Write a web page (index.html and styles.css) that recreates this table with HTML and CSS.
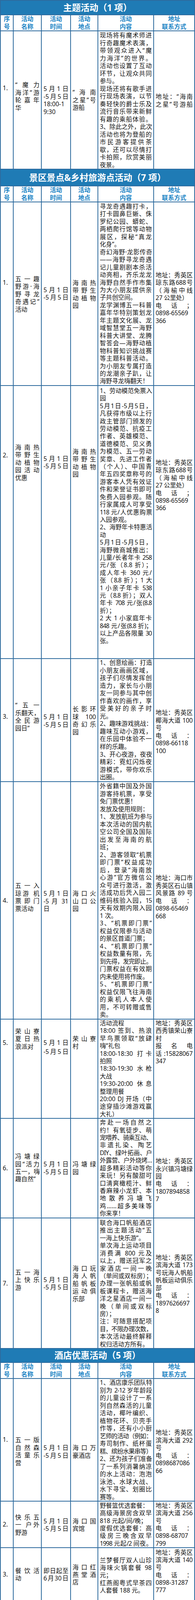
FILE: index.html
```html
<!DOCTYPE html>
<html lang="zh-CN">
<head>
<meta charset="utf-8">
<title>五一活动一览</title>
<link rel="stylesheet" href="styles.css">
</head>
<body>
<table class="sheet">
<colgroup><col class="c1"><col class="c2"><col class="c3"><col class="c4"><col class="c5"><col class="c6"></colgroup>
<tbody>
<tr class="band b1"><th colspan="6">主题活动（1 项）</th></tr>
<tr class="hd"><th>序<br>号</th><th>活动<br>名称</th><th>活动<br>时间</th><th>活动<br>地点</th><th>活动<br>内容</th><th>地址<br>联系方式</th></tr>
<tr class="s1r1">
<td class="n">1.</td>
<td class="nm">“魔力<br>海洋”游<br>轮嘉年<p>华</p></td>
<td class="tm">5月1日<br>-5月5日<br>18:00-1<p>9:30</p></td>
<td class="lc">“海南<br>之星”号<p>游船</p></td>
<td class="ct">现场将有魔术师进<br>行奇趣魔术表演，<br>带领观众进入“魔<br>力海洋”的世界。<br>活动也设置了互动<br>环节，让观众共同<p>参与。</p>现场还将有歌手进<br>行现场表演，以节<br>奏轻快的爵士乐及<br>流行音乐带来新鲜<br>有趣的乘船体验。<br><span class="k">3、除此之外，此次</span><br>活动也将为登船的<br>市民游客提供茶<br>歇，还可以尽情打<br>卡拍照，欣赏美丽<p>夜景。</p></td>
<td class="ad">地址：“海南<br>之星”号游船</td>
</tr>
<tr class="band b2"><th colspan="6">景区景点&amp;乡村旅游点活动（7 项）</th></tr>
<tr class="hd"><th>序<br>号</th><th>活动<br>名称</th><th>活动<br>时间</th><th>活动<br>地点</th><th>活动<br>内容</th><th>地址<br>联系方式</th></tr>
<tr class="s2r1">
<td class="n">1.</td>
<td class="nm">五一趣<br>野游·海<br>野寻龙<br>奇遇记”<p>活动</p></td>
<td class="tm">5月1日<br>-5月5日</td>
<td class="lc">海南热<br>带野生<br>动植物<p>园</p></td>
<td class="ct">寻龙奇遇趣打卡，<br>打卡圆鼻巨蜥、侏<br>罗纪公园、蟒蛇、<br>两栖爬行馆等动物<br>展区，探秘“真龙<p>化身”。</p><span class="k">奇幻海野·龙影传奇</span><br>——海野寻龙奇遇<br>记儿童剧剧本杀活<br>动亮相，齐乐龙龙<br>海野自然手作市集<br>为大小朋友提供亲<p>子共创空间。</p>龙学渊博五一科普<br>嘉年华特别策划龙<br>年主题文化展、龙<br>域智慧堂五一海野<br>科普大讲堂、龙腾<br>智答会—海野动植<br>物科普知识挑战赛<br>等主题科普活动。<br>为小朋友专属打造<br>的龙潮亲子趴，让<p>海野寻龙嗨翻天！</p></td>
<td class="ad">地址：秀英区<br>琼东路688号<br>（海榆中线<p>27 公里处）</p>电话；<br>0898-65569<p>366</p></td>
</tr>
<tr class="s2r2">
<td class="n">2.</td>
<td class="nm">海南热<br>带野生<br>动植物<br>园活动<p>优惠</p></td>
<td class="tm">5月1日<br>-5月5日</td>
<td class="lc">海南热<br>带野生<br>动植物<p>园</p></td>
<td class="ct"><span class="k">1、劳动模范免票入</span><p>园</p>5月1日-5月5日，<br>凡获得市级以上行<br>政主管部门颁发的<br>劳动模范、抗疫工<br>作者、英雄模范、<br>道德模范、见义勇<br>为模范、五一劳动<br>奖章、先进工作者<br>（个人）、中国青<br>年五四奖章称号的<br>游客本人凭有效证<br>件和荣誉证书即可<br>免费入园参观。随<br>行家属成人可享受<br><span class="k">118 元/人优惠购票</span><p>入园参观。</p><span class="k">2、海野年卡特惠活</span><p>动</p>5月1日-5月5日，<br>海野微商城推出：<br><span class="k">儿童/长者年卡 258</span><br>元/张（8.8 折）；<br>成人年卡 360 元/<br><span class="k">张（8.8 折）；1 大</span><br><span class="k">1 小亲子年卡 538</span><br><span class="k">元（8.8 折）；双人</span><br><span class="k">年卡 708 元/张(8.8</span><p>折）；</p>2 大 1 小家庭年卡<br><span class="k">848 元/张(8.8 折)；</span><br><span class="k">以上产品各限量 30</span><p>张。</p></td>
<td class="ad">地址：秀英区<br>琼东路688号<br>（海榆中线<p>27 公里处）</p>电话；<br>0898-65569<p>366</p></td>
</tr>
<tr class="s2r3">
<td class="n">3.</td>
<td class="nm">“五一<br><span class="k">乐翻天，</span><br>全民游<p>园日”</p></td>
<td class="tm">5月1日<br>-5月5日</td>
<td class="lc">长影环<br>球 100<br>奇幻乐<p>园</p></td>
<td class="ct"><span class="k">1、创意绘画：打造</span><br>小朋友画画区域，<br>孩子们尽情发挥创<br>造力，家长与小朋<br>友一同参与其中创<br>作喜欢的画作，享<br>受美好的亲子时<p>光。</p><span class="k">2、趣味游戏挑战：</span><br>趣味互动小游戏，<br>在乐园中体验不一<p>样的乐趣。</p><span class="k">3、开心夜游，夜夜</span><br>精彩：霓虹闪烁夜<br>游模式，带你欢乐<p>出圈。</p></td>
<td class="ad">地址：秀英区<br>椰海大道 100<p>号</p>电话：<br>0898-66118<p>100</p></td>
</tr>
<tr class="s2r4">
<td class="n">4.</td>
<td class="nm">五一入<br>琼游 机<br>票即门<p>票活动</p></td>
<td class="tm">5月1日<br>-5 月 31<p>日</p></td>
<td class="lc">海口火<br>山口公<p>园</p></td>
<td class="ct">外省籍中国及外国<br>游客持机票，享受<p>免门票优惠！</p><p>发放及使用规则：</p><span class="k">1、发放航班为参与</span><br>本次活动的国内航<br>空公司全国及国际<br>出发至海南的航<p>班；</p>2、游客领取“机票<br>即门票”权益成功<br>后，登录“海南放<br>心游”官方微信公<br>众号进行激活，激<br>活成功后凭入园二<br><span class="k">维码核验入园，15</span><br>天有效期内限入园<p>1 次。</p>3、“机票即门票”<br>权益仅限参与活动<p>的景区首道门票；</p>4、“机票即门票”<br>权益数量有限，先<br><span class="k">到先得，发完即止。</span><br>门票权益在有效期<p>内未使用将作废。</p>5、“机票即门票”<br>权益仅限飞往海南<br>的乘机人本人使<br>用，不可转赠或售<p>卖。</p></td>
<td class="ad">地址：海口市<br>秀英区石山镇<br>风景路 89 号<br>电话：<br>0898-65469<p>668</p></td>
</tr>
<tr class="s2r5">
<td class="n">5.</td>
<td class="nm">荣山寮<br>夏日热<p>浪派对</p></td>
<td class="tm">5月1日<br>-5月5日</td>
<td class="lc">荣山寮<p>村</p></td>
<td class="ct"><p>活动流程</p>18:00 签到、热浪<br>早鸟票领取“放肆<p>嗨”礼包</p>18:00-18:30 打卡<p>拍照</p>18:30-19:30 水枪<p>大战</p>19:30-20:00 休息<p>整理用餐</p>20:00 DJ 开场（中<br>途穿插沙滩游戏赢<p>大礼）</p></td>
<td class="ad">地址：秀英区<br>西秀镇荣山寮<p>村</p>报名电<br>话:15828067<p>347</p></td>
</tr>
<tr class="s2r6">
<td class="n">6.</td>
<td class="nm">冯塘绿<br>园“活力<br><span class="k">五一，嗨</span><p>趣自然”</p></td>
<td class="tm">5月1日<br>-5月5日</td>
<td class="lc">冯塘绿<p>园</p></td>
<td class="ct">奔赴一场自然之<br>约！有氧徒步、萌<br><span class="k">宠喂养、骑乘互动、</span><br>非遗扎染、陶艺<br><span class="k">DIY、绿叶拓画、户</span><br><span class="k">外露营、户外烧烤…</span><br>超多精彩活动等你<br>来玩！另有酸甜可<br>口清爽橄榄汁、鲜<br>香麻辣小龙虾、本<br>地散养冯塘飞<br>鸡……超多美味等<p>你来享！</p></td>
<td class="ad">地址：秀英区<br>永兴镇冯塘绿<p>园</p>电话：<br>1807894858<p>7</p></td>
</tr>
<tr class="s2r7">
<td class="n">7.</td>
<td class="nm">五一海<br>上快乐<p>游</p></td>
<td class="tm">5月1日<br>-5月5日</td>
<td class="lc">海口玩<br>海人帆<br>船帆板<br>运动俱<p>乐部</p></td>
<td class="ct">联合海口帆船酒店<br>推出主题活动“五<p>一海上快乐游”。</p>单次海上运动项目<br>消费满 800 元及<br>以上，赠送冠军之<br>家酒店一间一晚<br><span class="k">（单间或双标房）；</span><br>办理一张帆船或帆<br>板课程卡，赠送海<br>洋之星酒店一间一<br>晚（单间或双标<p>房）；</p>注：可随意搭配项<br><span class="k">目，不限办理次数，</span><br>本次活动最终解释<p>权归活动方所有。</p></td>
<td class="ad">地址：秀英区<br>滨海大道 173<br>号玩海人帆船<br>帆板运动俱乐<p>部</p>电话：<br>1897626697<p>8</p></td>
</tr>
<tr class="band b3"><th colspan="6">酒店优惠活动（5 项）</th></tr>
<tr class="hd"><th>序<br>号</th><th>活动<br>名称</th><th>活动<br>时间</th><th>活动<br>地点</th><th>活动<br>内容</th><th>地址<br>联系方式</th></tr>
<tr class="s3r1">
<td class="n">1.</td>
<td class="nm">五一版<br>自然森<br>活童乐<p>营</p></td>
<td class="tm">5月1日<br>-5月5日</td>
<td class="lc">海口万<p>豪酒店</p></td>
<td class="ct"><span class="k">1、酒店康乐团队特</span><br><span class="k">别为 2-12 岁年龄段</span><br>的儿童设计了一系<br>列自然森活的儿童<br>活动，椰叶编织、<br>植物花环、贝壳手<br>作等，还有小小厨<br><span class="k">艺师的活动（例如：</span><br>寿司制作、纸杯蛋<br><span class="k">糕、缤纷水果串等）</span><br><span class="k">2、还为孩子们准备</span><br>了一系列消暑纳凉<br>的水上活动：泡泡<br>泳池、水球大战、<br>水下寻宝、划圈比<p>赛等。</p></td>
<td class="ad">地址：秀英区<br>滨海大道 292<p>号</p>电话：<br>0898687086<p>66</p></td>
</tr>
<tr class="s3r2">
<td class="n">2.</td>
<td class="nm">快乐五<br>一 户外<p>野游</p></td>
<td class="tm">5月1日<br>-5月5日</td>
<td class="lc">海口国<p>宾馆</p></td>
<td class="ct"><p>野餐篮优选套餐：</p>高级海景房含双早<p>818 元起/间/晚；</p>度假优选套餐：高<br>级房三晚含双早<br><span class="k">1998 元起/2 间夜。</span></td>
<td class="ad">地址：秀英区<br>滨海大道 256<p>号</p>电话：<br>0898-68707<p>799</p></td>
</tr>
<tr class="s3r3">
<td class="n">3.</td>
<td class="nm">餐饮活<p>动</p></td>
<td class="tm">即日起至<br>6月30日</td>
<td class="lc">海口红<br>燕堂酒<p>店</p></td>
<td class="ct">兰梦餐厅双人山珍<br>海味火锅套餐 98<p>元；</p>红燕阁粤式早茶四<p>人套餐 188 元。</p></td>
<td class="ad">地址：秀英区<br>滨海大道 140<p>号</p>电话：<br>0898-31287<p>777</p></td>
</tr>
</tbody>
</table>
</body>
</html>
```

FILE: styles.css
```css
* { box-sizing: border-box; margin: 0; padding: 0; }
html, body { background: #fff; }
body { width: 500px; font-family: "Noto Sans", "Noto Sans CJK SC", sans-serif; color: #111; }

.sheet {
  width: 500px;
  table-layout: fixed;
  border-collapse: separate;
  border-spacing: 0;
  border-top: 2px solid #2e6b9e;
  border-left: 2px solid #2e6b9e;
  font-size: 15.6px;
  line-height: 19.5px;
}
.c1 { width: 33px; } .c2 { width: 72px; } .c3 { width: 75px; }
.c4 { width: 70px; } .c5 { width: 143px; } .c6 { width: 105px; }

.sheet th, .sheet td { border-right: 2px solid #2e6b9e; border-bottom: 2px solid #2e6b9e; }

.band th {
  background: #1f7bb5;
  color: #fff;
  font-family: "Noto Sans", "Noto Sans CJK SC", sans-serif;
  font-size: 22.5px;
  font-weight: 700;
  line-height: 24px;
  text-align: center;
  vertical-align: middle;
}
.b1 { height: 37px; } .b2 { height: 43px; } .b3 { height: 36px; }

.hd { height: 41px; }
.hd th { color: #1c84c5; font-weight: 700; text-align: center; vertical-align: middle; line-height: 19.5px; }

.sheet td { vertical-align: top; text-align: justify; text-align-last: justify; padding: 0 4px; }
.sheet td p { text-align-last: auto; }
.sheet td.n { padding-left: 5px; }
.sheet td.tm { padding-left: 4.5px; padding-right: 4.5px; }
.sheet td.ad { letter-spacing: -0.2px; }
.k { letter-spacing: -1px; }

/* row heights, line pitch and vertical placement of each cell */
.s1r1 { height: 353px; line-height: 19.5px; }
.s1r1 .n { padding-top: 136px; } .s1r1 .nm { padding-top: 128px; } .s1r1 .tm { padding-top: 138px; }
.s1r1 .lc { padding-top: 147px; } .s1r1 .ct { padding-top: 1px; } .s1r1 .ad { padding-top: 158px; }

.s2r1 { height: 470px; line-height: 19.45px; }
.s2r1 .n { padding-top: 196px; } .s2r1 .nm { padding-top: 187px; } .s2r1 .tm { padding-top: 215px; }
.s2r1 .lc { padding-top: 197px; } .s2r1 .ct { padding-top: 1px; } .s2r1 .ad { padding-top: 177px; }

.s2r2 { height: 699px; line-height: 19.4px; }
.s2r2 .n { padding-top: 168px; } .s2r2 .nm { padding-top: 148px; } .s2r2 .tm { padding-top: 177px; }
.s2r2 .lc { padding-top: 159px; } .s2r2 .ct { padding-top: 3px; } .s2r2 .ad { padding-top: 187px; }

.s2r3 { height: 315px; line-height: 19.55px; }
.s2r3 .n { padding-top: 138px; } .s2r3 .nm { padding-top: 109px; } .s2r3 .tm { padding-top: 139px; }
.s2r3 .lc { padding-top: 119px; } .s2r3 .ct { padding-top: 0; } .s2r3 .ad { padding-top: 128px; }

.s2r4 { height: 608px; line-height: 19.5px; }
.s2r4 .n { padding-top: 294px; } .s2r4 .nm { padding-top: 256px; } .s2r4 .tm { padding-top: 276px; }
.s2r4 .lc { padding-top: 276px; } .s2r4 .ct { padding-top: 1px; } .s2r4 .ad { padding-top: 236px; }

.s2r5 { height: 254px; line-height: 19.39px; }
.s2r5 .n { padding-top: 50px; } .s2r5 .nm { padding-top: 21px; } .s2r5 .tm { padding-top: 48px; line-height: 23.3px; }
.s2r5 .lc { padding-top: 40px; } .s2r5 .ct { padding-top: 0; } .s2r5 .ad { padding-top: 0; }

.s2r6 { height: 255px; line-height: 19.44px; }
.s2r6 .n { padding-top: 117px; } .s2r6 .nm { padding-top: 87px; } .s2r6 .tm { padding-top: 107px; }
.s2r6 .lc { padding-top: 107px; } .s2r6 .ct { padding-top: 0; } .s2r6 .ad { padding-top: 99px; }

.s2r7 { height: 334px; line-height: 19.41px; }
.s2r7 .n { padding-top: 157px; } .s2r7 .nm { padding-top: 129px; } .s2r7 .tm { padding-top: 148px; }
.s2r7 .lc { padding-top: 119px; } .s2r7 .ct { padding-top: 2px; } .s2r7 .ad { padding-top: 91px; }

.s3r1 { height: 314px; line-height: 19.5px; }
.s3r1 .n { padding-top: 146px; } .s3r1 .nm { padding-top: 147px; } .s3r1 .tm { padding-top: 167px; }
.s3r1 .lc { padding-top: 167px; } .s3r1 .ct { padding-top: 0; } .s3r1 .ad { padding-top: 128px; }

.s3r2 { height: 119px; line-height: 19.3px; }
.s3r2 .n { padding-top: 49px; } .s3r2 .nm { padding-top: 31px; } .s3r2 .tm { padding-top: 41px; }
.s3r2 .lc { padding-top: 41px; } .s3r2 .ct { padding-top: 1px; } .s3r2 .ad { padding-top: 1px; }

.s3r3 { height: 138px; line-height: 19.2px; }
.s3r3 .n { padding-top: 58px; } .s3r3 .nm { padding-top: 49px; } .s3r3 .tm { padding-top: 49px; }
.s3r3 .lc { padding-top: 40px; } .s3r3 .ct { padding-top: 22px; } .s3r3 .ad { padding-top: 2px; }
```
